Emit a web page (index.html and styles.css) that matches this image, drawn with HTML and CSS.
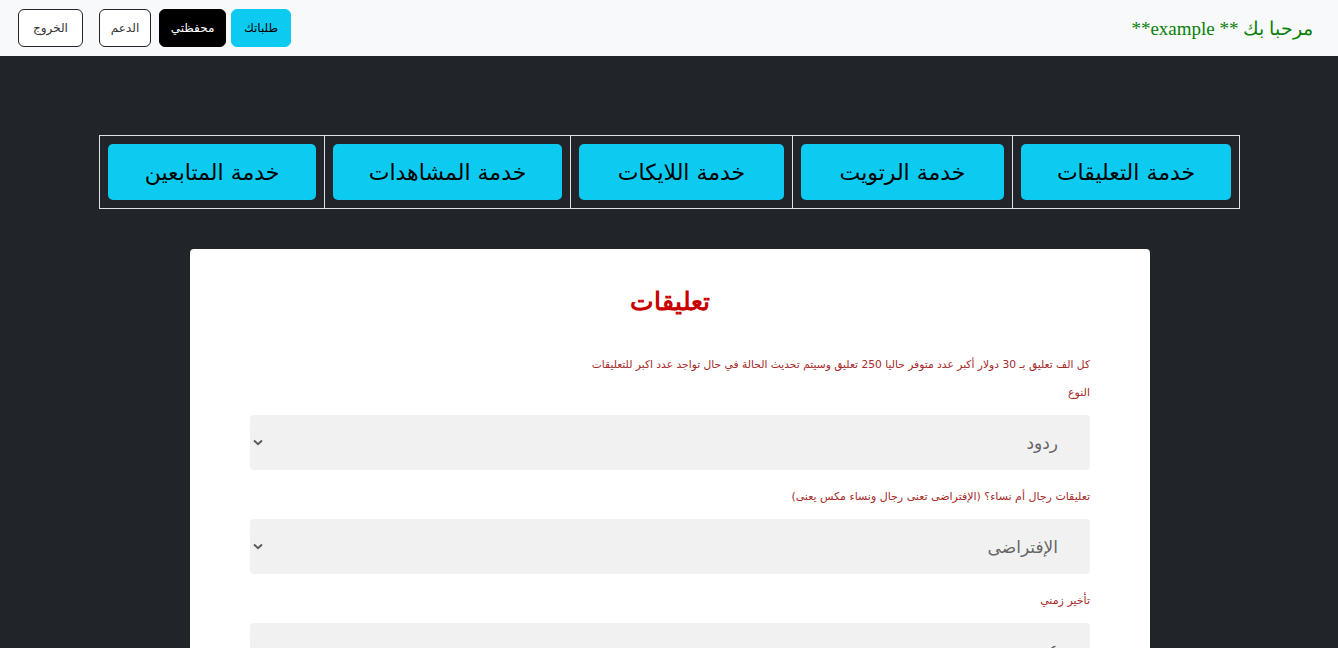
FILE: index.html
```html
<!DOCTYPE html>
<html lang="ar" dir="rtl">
<head>
<meta charset="utf-8">
<title>تعليقات</title>
<link rel="stylesheet" href="styles.css">
</head>
<body>
<nav class="topbar">
  <a class="brand" href="#">مرحبا بك ** example**</a>
  <div class="actions">
    <a class="btn btn-info" href="#">طلباتك</a>
    <a class="btn btn-dark" href="#">محفظتي</a>
    <a class="btn btn-outline btn-support" href="#">الدعم</a>
    <a class="btn btn-outline btn-logout" href="#">الخروج</a>
  </div>
</nav>

<main class="page">
  <div class="container">
    <table class="services">
      <colgroup>
        <col class="c1"><col class="c2"><col class="c3"><col class="c4"><col class="c5">
      </colgroup>
      <tr>
        <td><a class="service-btn" href="#">خدمة التعليقات</a></td>
        <td><a class="service-btn" href="#">خدمة الرتويت</a></td>
        <td><a class="service-btn" href="#">خدمة اللايكات</a></td>
        <td><a class="service-btn" href="#">خدمة المشاهدات</a></td>
        <td><a class="service-btn" href="#">خدمة المتابعين</a></td>
      </tr>
    </table>

    <section class="card">
      <h2 class="card-title">تعليقات</h2>
      <p class="note">كل الف تعليق بـ 30 دولار أكبر عدد متوفر حاليا 250 تعليق وسيتم تحديث الحالة في حال تواجد عدد اكبر للتعليقات</p>
      <label class="label">النوع</label>
      <div class="select-wrap">
        <select class="select"><option>ردود</option></select>
        <svg class="chev" viewBox="0 0 10 7" width="10" height="7"><path d="M1 1.5 L5 5.2 L9 1.5" fill="none" stroke="#5a5a5a" stroke-width="2"/></svg>
      </div>
      <label class="label">تعليقات رجال أم نساء؟ (الإفتراضى تعنى رجال ونساء مكس يعنى)</label>
      <div class="select-wrap">
        <select class="select"><option>الإفتراضى</option></select>
        <svg class="chev" viewBox="0 0 10 7" width="10" height="7"><path d="M1 1.5 L5 5.2 L9 1.5" fill="none" stroke="#5a5a5a" stroke-width="2"/></svg>
      </div>
      <label class="label">تأخير زمني</label>
      <div class="select-wrap">
        <select class="select"><option>٤</option></select>
        <svg class="chev" viewBox="0 0 10 7" width="10" height="7"><path d="M1 1.5 L5 5.2 L9 1.5" fill="none" stroke="#5a5a5a" stroke-width="2"/></svg>
      </div>
    </section>
  </div>
</main>
</body>
</html>
```

FILE: styles.css
```css
* { box-sizing: border-box; }

html, body {
  margin: 0;
  padding: 0;
}

body {
  background: #212529;
  font-family: "DejaVu Sans", "Noto Sans", sans-serif;
}

.topbar {
  height: 56px;
  background: #f8f9fa;
  display: flex;
  align-items: center;
  justify-content: space-between;
  padding: 0 25px 0 18px;
}

.brand {
  font-family: "Liberation Serif", "DejaVu Serif", serif;
  font-size: 19px;
  color: #0a800a;
  text-decoration: none;
  padding-top: 1px;
}

.actions {
  display: flex;
  align-items: center;
}

.btn {
  display: flex;
  align-items: center;
  justify-content: center;
  height: 38px;
  padding: 0 9px;
  border-radius: 6px;
  font-size: 12px;
  text-decoration: none;
  border: 1px solid transparent;
  white-space: nowrap;
}

.btn-info {
  background: #0dcaf0;
  color: #000;
  border-color: #0dcaf0;
  width: 60px;
}

.btn-dark {
  background: #000;
  color: #fff;
  border-color: #000;
  width: 67px;
  margin-right: 5px;
}

.btn-outline {
  background: #fff;
  color: #333;
  border-color: #212529;
}

.btn-support {
  width: 52px;
  margin-right: 8px;
}

.btn-logout {
  width: 65px;
  margin-right: 16px;
}

.page {
  padding-top: 79px;
  padding-left: 2px;
}

.container {
  width: 1140px;
  margin: 0 auto;
}

.services {
  width: 1140px;
  table-layout: fixed;
  border-collapse: collapse;
}

.services col.c1 { width: 227px; }
.services col.c2 { width: 220px; }
.services col.c3 { width: 222px; }
.services col.c4 { width: 246px; }
.services col.c5 { width: 225px; }

.services td {
  border: 1px solid #dee2e6;
  padding: 8px;
}

.service-btn {
  display: flex;
  align-items: center;
  justify-content: center;
  height: 56px;
  background: #0dcaf0;
  color: #000;
  border-radius: 5px;
  font-size: 22px;
  text-decoration: none;
  white-space: nowrap;
}

.card {
  width: 960px;
  margin: 40px auto 0;
  background: #fff;
  border-radius: 4px;
  padding: 36px 60px 60px;
}

.card-title {
  margin: 0 0 36px;
  text-align: center;
  font-family: "Liberation Serif", "DejaVu Serif", serif;
  font-size: 25px;
  line-height: 34px;
  font-weight: bold;
  color: #c80000;
}

.note {
  margin: 0 0 8px;
  font-size: 10.7px;
  line-height: 20px;
  color: #a52a2a;
}

.label {
  display: block;
  font-size: 11px;
  line-height: 20px;
  color: #a52a2a;
  margin-bottom: 12px;
}

.select-wrap {
  position: relative;
  margin-bottom: 17px;
}

.select {
  display: block;
  width: 100%;
  height: 55px;
  appearance: none;
  -webkit-appearance: none;
  background: #f1f1f1;
  border: none;
  border-radius: 4px;
  padding: 0 32px 0 40px;
  font-family: "DejaVu Sans", sans-serif;
  font-size: 17px;
  color: #666;
  outline: none;
}

.chev {
  position: absolute;
  left: 3px;
  top: 24px;
}
```
